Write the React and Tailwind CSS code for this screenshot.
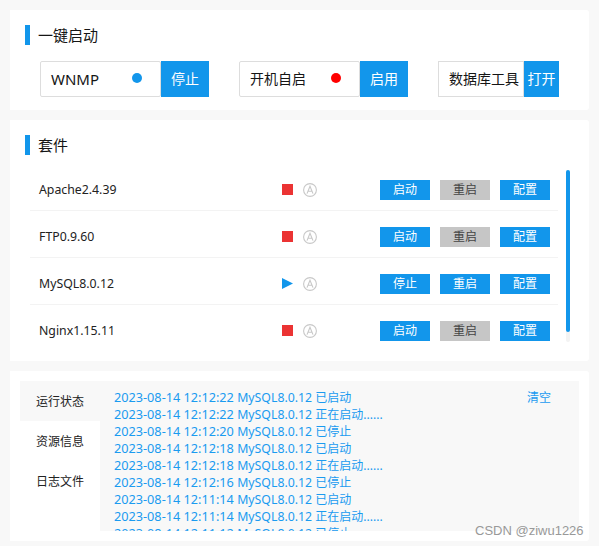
import React from 'react';

const starters = [
  { name: 'WNMP', action: '停止', dot: 'bg-[#1296eb]', text: 'text-[15px]' },
  { name: '开机自启', action: '启用', dot: 'bg-[#ff0000]', text: 'text-sm' },
];

const suites = [
  { name: 'Apache2.4.39', running: false },
  { name: 'FTP0.9.60', running: false },
  { name: 'MySQL8.0.12', running: true },
  { name: 'Nginx1.15.11', running: false },
];

const logs = [
  ['2023-08-14 12:12:22', '已启动'],
  ['2023-08-14 12:12:22', '正在启动......'],
  ['2023-08-14 12:12:20', '已停止'],
  ['2023-08-14 12:12:18', '已启动'],
  ['2023-08-14 12:12:18', '正在启动......'],
  ['2023-08-14 12:12:16', '已停止'],
  ['2023-08-14 12:11:14', '已启动'],
  ['2023-08-14 12:11:14', '正在启动......'],
  ['2023-08-14 12:11:12', '已停止'],
];

const tabs = ['运行状态', '资源信息', '日志文件'];

function Title({ children }) {
  return (
    <div className="flex items-center h-5">
      <span className="w-[5px] h-5 bg-[#1296eb]" />
      <span className="ml-2 text-[15px] text-[#151515]">{children}</span>
    </div>
  );
}

function AutoIcon() {
  return (
    <svg width="14" height="14" viewBox="0 0 14 14" fill="none" stroke="#c8c8c8" strokeWidth="1.1">
      <circle cx="7" cy="7" r="6.4" />
      <path d="M4 10.6 L7 3.2 L10 10.6 M5 8.2 H9" />
    </svg>
  );
}

function RowButton({ label, off }) {
  return (
    <button className={`w-[50px] h-5 text-xs ${off ? 'bg-[#c6c6c6] text-[#444]' : 'bg-[#1296eb] text-white'}`}>
      {label}
    </button>
  );
}

export default function App() {
  return (
    <div
      className="relative w-[599px] h-[546px] overflow-hidden bg-[#f8f8f8] px-[10px] pt-[10px] flex flex-col gap-[10px]"
      style={{ fontFamily: '"Noto Sans", "Noto Sans CJK SC", sans-serif' }}
    >
      {/* 一键启动 */}
      <section className="h-[100px] bg-white rounded-r-[3px] pl-[15px] pt-[15px]">
        <Title>一键启动</Title>
        <div className="flex gap-[30px] mt-4 ml-[15px]">
          {starters.map((item) => (
            <div key={item.name} className="flex h-9">
              <div className={`w-[121px] border border-[#ddd] rounded-[2px] pl-[10px] pr-[18px] flex items-center justify-between text-[#151515] ${item.text}`}>
                <span>{item.name}</span>
                <span className={`w-[10px] h-[10px] rounded-full -mt-[2px] ${item.dot}`} />
              </div>
              <button className="w-12 bg-[#1296eb] text-white text-sm">{item.action}</button>
            </div>
          ))}
          <div className="flex h-9">
            <div className="w-[86px] border border-[#ddd] pl-[10px] flex items-center text-sm text-[#151515] whitespace-nowrap">
              数据库工具
            </div>
            <button className="w-[35px] bg-[#1296eb] text-white text-sm">打开</button>
          </div>
        </div>
      </section>

      {/* 套件 */}
      <section className="relative h-[241px] bg-white rounded-r-[3px] pl-[15px] pt-[15px]">
        <Title>套件</Title>
        <div className="mt-[9px] ml-[5px] w-[528px]">
          {suites.map((item, i) => (
            <div
              key={item.name}
              className={`flex items-center h-[47px] pt-[6px] ${i < suites.length - 1 ? 'border-b border-[#f3f3f3]' : 'pb-px'}`}
            >
              <span className="w-[252px] pl-[9px] text-[12.3px] text-[#222]">{item.name}</span>
              {item.running ? (
                <svg width="11" height="11" viewBox="0 0 11 11" className="mr-[10px] -mt-px">
                  <path d="M0 0 L11 5.5 L0 11 Z" fill="#1296eb" />
                </svg>
              ) : (
                <span className="w-[11px] h-[11px] bg-[#eb3333] mr-[10px] -mt-px" />
              )}
              <AutoIcon />
              <div className="flex gap-[10px] ml-[63px]">
                <RowButton label={item.running ? '停止' : '启动'} />
                <RowButton label="重启" off={!item.running} />
                <RowButton label="配置" />
              </div>
            </div>
          ))}
        </div>
        <div className="absolute left-[556px] top-[50px] w-1 h-[172px] bg-[#f3f3f3] rounded-full">
          <div className="h-[162px] bg-[#1296eb] rounded-full" />
        </div>
      </section>

      {/* 运行状态 */}
      <section className="h-[170px] bg-white rounded-r-[3px] p-[10px]">
        <div className="flex h-[150px]">
          <div className="w-20 flex flex-col text-xs text-[#222]">
            {tabs.map((tab, i) => (
              <div key={tab} className={`h-10 pl-4 pt-[2px] flex items-center ${i === 0 ? 'bg-[#f8f8f8]' : ''}`}>
                {tab}
              </div>
            ))}
          </div>
          <div className="flex-1 bg-[#f8f8f8] overflow-hidden flex pl-[14px] pt-2 text-xs text-[#1a9bf0]">
            <div className="w-[413px] shrink-0">
              {logs.map(([time, msg], i) => (
                <div key={i} className="h-[17px] leading-[17px] whitespace-nowrap">
                  <span className="text-[12.7px]">{time} </span>
                  <span className="text-[12.3px]">MySQL8.0.12 </span>
                  {msg}
                </div>
              ))}
            </div>
            <button className="text-xs text-[#1a9bf0] h-[17px] leading-[17px]">清空</button>
          </div>
        </div>
      </section>

      <span
        className="absolute left-[475px] top-[523px] text-[13px] leading-4 text-[#999] whitespace-nowrap"
        style={{ fontFamily: '"Liberation Sans", sans-serif' }}
      >
        CSDN @ziwu1226
      </span>
    </div>
  );
}
